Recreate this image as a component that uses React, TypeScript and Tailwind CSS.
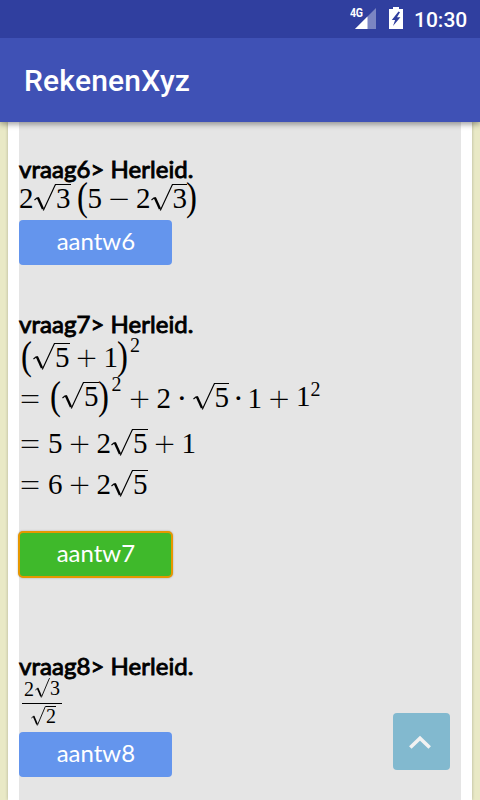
import React from 'react';

type Props = { className?: string; children?: React.ReactNode };

const Num: React.FC<Props> = ({ className = '', children }) => (
  <span className={`w-[14.5px] shrink-0 text-center text-[29px] leading-none ${className}`}>{children}</span>
);

const Op: React.FC<Props> = ({ children }) => (
  <span className="-mt-[8px] flex h-[34px] w-[34px] shrink-0 justify-center font-['Inter',sans-serif] text-[41px] leading-[40px] font-thin [-webkit-text-stroke:0.3px_black]">
    {children}
  </span>
);

const Equals: React.FC = () => (
  <span className="-mt-[4px] -ml-[0.5px] flex h-[34px] w-[22px] shrink-0 scale-x-[1.35] justify-center font-['Inter',sans-serif] text-[35px] leading-[33px] font-thin [-webkit-text-stroke:0.4px_black]">
    =
  </span>
);

const Paren: React.FC<{ mt?: string; className?: string; children?: React.ReactNode }> = ({
  mt = '-mt-[7px]',
  className = '',
  children,
}) => (
  <span className={`flex w-[9px] shrink-0 scale-x-[0.82] justify-center text-[40px] leading-none ${mt} ${className}`}>
    {children}
  </span>
);

const Dot: React.FC<{ width?: string }> = ({ width = 'w-[21.5px]' }) => (
  <span className={`shrink-0 text-center text-[32px] leading-[29px] ${width}`}>·</span>
);

const Sup: React.FC<{ mt?: string; ml?: string }> = ({ mt = '-mt-[8px]', ml = 'ml-[3px]' }) => (
  <span className={`w-[10px] shrink-0 text-[20px] leading-none ${mt} ${ml}`}>2</span>
);

const Root: React.FC<Props> = ({ className = '', children }) => (
  <span className={`flex shrink-0 ${className}`}>
    <svg width="22" height="27" viewBox="0 0 22 27" fill="none" stroke="black">
      <path d="M0.5 16 L3.6 13.5" strokeWidth="1.1" />
      <path d="M3.8 13.5 L9 25" strokeWidth="2.4" />
      <path d="M9.3 26.5 L21.4 0.6 H22" strokeWidth="1.2" />
    </svg>
    <span className="h-[27px] w-[14.5px] border-t border-black text-center text-[29px] leading-none">
      <span className="-mt-[1px] block">{children}</span>
    </span>
  </span>
);

const SmallRoot: React.FC<{ bar?: boolean; children?: React.ReactNode }> = ({ bar, children }) => (
  <span className="flex">
    <svg width="15" height="20" viewBox="0 0 15 20" fill="none" stroke="black">
      <path d="M0.4 12 L2.6 10.2" strokeWidth="0.9" />
      <path d="M2.6 10.2 L6.1 18.4" strokeWidth="1.7" />
      <path d="M6.3 19.5 L14.3 0.5 H15" strokeWidth="0.9" />
    </svg>
    <span className={`h-[20px] w-[10px] border-t text-[20px] leading-none ${bar ? 'border-black' : 'border-transparent'}`}>
      <span className="-mt-[1px] block">{children}</span>
    </span>
  </span>
);

const Formula: React.FC<Props> = ({ className = '', children }) => (
  <div className={`flex items-start font-['Liberation_Serif',serif] text-black ${className}`}>{children}</div>
);

const Heading: React.FC<Props> = ({ children }) => (
  <h2 className="h-[30px] font-['Lato',sans-serif] text-[24px] leading-[28px] tracking-[0.04px] whitespace-nowrap text-black [-webkit-text-stroke:0.9px_black]">
    {children}
  </h2>
);

const Answer: React.FC<Props> = ({ className = '', children }) => (
  <button
    className={`ml-[0.4px] block h-[45px] w-[153px] rounded-[4px] pb-[3px] font-['Lato',sans-serif] text-[24px] leading-[42px] text-white ${className}`}
  >
    {children}
  </button>
);

const StatusBar: React.FC = () => (
  <div className="flex h-[38px] items-start bg-[#303f9f] pl-[350px] text-white">
    <div className="relative mt-[8px] h-[22px] w-[27px]">
      <svg width="27" height="22" viewBox="0 0 27 22">
        <path d="M5 21 L26 0 V21 Z" fill="#7b85c2" />
        <path d="M5 21 L17.5 8.5 V21 Z" fill="white" />
      </svg>
      <span className="absolute top-0 left-0 origin-top-left scale-x-[0.88] bg-[#303f9f] pr-px font-['Roboto',sans-serif] text-[12px] leading-[11px] font-bold tracking-[-0.3px]">
        4G
      </span>
    </div>
    <svg className="mt-[7px] ml-[12px]" width="14" height="22" viewBox="0 0 14 22">
      <path d="M4 0 H10 V2 H14 V22 H0 V2 H4 Z" fill="white" />
      <path d="M9.5 4.5 L2.8 12.9 H6.1 L4 19 L11.4 10.3 H8 L11 5.2 Z" fill="#303f9f" />
    </svg>
    <span className="mt-[8px] ml-[11px] font-['Roboto',sans-serif] text-[21px] leading-[24px] font-medium">10:30</span>
  </div>
);

export default function App() {
  return (
    <div className="relative flex h-[800px] w-[480px] flex-col overflow-hidden bg-[#e9e9c6]">
      <div className="relative z-10 shadow-[0_2px_6px_rgba(0,0,0,0.4)]">
        <StatusBar />
        <header className="flex h-[84px] items-center bg-[#3f51b5] pl-[24px]">
          <h1 className="font-['Roboto',sans-serif] text-[30px] font-medium tracking-[0.2px] text-white">RekenenXyz</h1>
        </header>
      </div>

      <main className="mr-[8px] ml-[8px] flex-1 bg-white pr-[11px] pl-[11px] shadow-[0_0_3px_rgba(0,0,0,0.25)]">
        <div className="h-full bg-[#e5e5e5] pt-[33px]">
          <section className="h-[155px]">
            <Heading>vraag6&gt; Herleid.</Heading>
            <Formula className="-mt-px h-[36px]">
              <Num>2</Num>
              <Root className="ml-[0.5px]">3</Root>
              <Paren className="ml-[7.5px]">(</Paren>
              <Num className="ml-[0.5px]">5</Num>
              <Op>−</Op>
              <Num>2</Num>
              <Root>3</Root>
              <Paren>)</Paren>
            </Formula>
            <Answer className="bg-[#6495ed]">aantw6</Answer>
          </section>

          <section className="h-[342px]">
            <Heading>vraag7&gt; Herleid.</Heading>
            <Formula className="mt-[3px] h-[41px]">
              <Paren className="ml-[3px]">(</Paren>
              <Root className="ml-[2px]">5</Root>
              <Op>+</Op>
              <Num>1</Num>
              <Paren>)</Paren>
              <Sup />
            </Formula>
            <Formula className="h-[45px]">
              <Equals />
              <Paren mt="-mt-[8px]" className="ml-[10.5px]">
                (
              </Paren>
              <Root className="-mt-[2px] ml-[2px]">5</Root>
              <Paren mt="-mt-[8px]">)</Paren>
              <Sup mt="-mt-[10px]" ml="ml-[4px]" />
              <span className="w-px shrink-0" />
              <Op>+</Op>
              <Num>2</Num>
              <Dot />
              <Root className="-mt-px">5</Root>
              <Dot width="w-[18.5px]" />
              <Num>1</Num>
              <Op>+</Op>
              <Num className="-mt-[2px]">1</Num>
              <Sup mt="-mt-[5px]" ml="ml-0" />
            </Formula>
            <Formula className="h-[41px]">
              <Equals />
              <Num className="ml-[7.5px]">5</Num>
              <Op>+</Op>
              <Num>2</Num>
              <Root>5</Root>
              <Op>+</Op>
              <Num>1</Num>
            </Formula>
            <Formula className="h-[62px]">
              <Equals />
              <Num className="ml-[7.5px]">6</Num>
              <Op>+</Op>
              <Num>2</Num>
              <Root>5</Root>
            </Formula>
            <Answer className="bg-[#3fb92b] shadow-[0_0_2px_1px_rgba(0,0,0,0.3)] outline-2 outline-[#e59700] -outline-offset-1">
              aantw7
            </Answer>
          </section>

          <section>
            <Heading>vraag8&gt; Herleid.</Heading>
            <Formula className="-mt-[4px] ml-[3px] h-[53.5px] w-[40px] flex-col">
              <span className="flex h-[25px] pl-[2px] text-[20px] leading-none">
                <span className="mt-[1px] w-[11px]">2</span>
                <SmallRoot>3</SmallRoot>
              </span>
              <span className="flex h-[29px] w-[40px] border-t-[1.5px] border-black pt-[2px] pl-[9px]">
                <SmallRoot bar>2</SmallRoot>
              </span>
            </Formula>
            <Answer className="bg-[#6495ed]">aantw8</Answer>
          </section>
        </div>
      </main>

      <button className="absolute right-[30px] bottom-[30px] flex h-[57px] w-[57px] items-center justify-center rounded-[4px] bg-[#82b9cf] pr-[3px]">
        <svg width="22" height="14" viewBox="0 0 22 14" fill="none" stroke="#f2f2f2" strokeWidth="3.6">
          <path d="M1.3 12.5 L11 3.2 L20.7 12.5" />
        </svg>
      </button>
    </div>
  );
}
